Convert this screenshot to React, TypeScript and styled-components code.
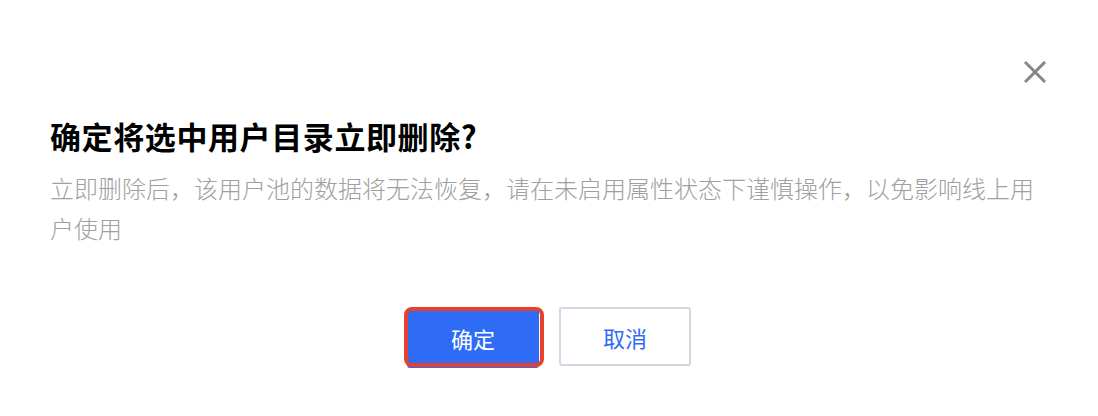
import React from "react";
import styled, { createGlobalStyle } from "styled-components";

const Global = createGlobalStyle`
  html, body { margin: 0; padding: 0; background: #fff; }
  body { font-family: "Noto Sans CJK SC", "Noto Sans", sans-serif; }
`;

const Dialog = styled.div`
  width: 1098px;
  height: 416px;
  box-sizing: border-box;
  padding: 0 52px 0 50px;
  display: flex;
  flex-direction: column;
  background: #fff;
`;

const Header = styled.div`
  display: flex;
  justify-content: flex-end;
  margin-top: 61px;
  height: 22px;
`;

const CloseButton = styled.button`
  width: 22px;
  height: 22px;
  padding: 0;
  border: none;
  background: transparent;
  cursor: pointer;
  display: flex;
`;

const Title = styled.h2`
  margin: 31px 0 0;
  font-size: 31px;
  letter-spacing: 0.6px;
  line-height: 43px;
  font-weight: 700;
  color: #000;
`;

const Desc = styled.p`
  margin: 11px 0 0;
  font-size: 24px;
  letter-spacing: 0;
  line-height: 40px;
  font-weight: 300;
  color: #a0a0a0;
`;

const Footer = styled.div`
  margin-top: 59px;
  display: flex;
  justify-content: center;
  align-items: flex-start;
  gap: 20px;
  padding-left: 2px;
`;

const Button = styled.button<{ $primary?: boolean }>`
  position: relative;
  width: 132px;
  height: ${(p) => (p.$primary ? "60px" : "59px")};
  margin-top: ${(p) => (p.$primary ? "1px" : "0")};
  box-sizing: border-box;
  font-family: inherit;
  font-size: 22px;
  cursor: pointer;
  border-radius: 3px;
  border: 2px solid ${(p) => (p.$primary ? "#2f6cf6" : "#d4d8e3")};
  background: ${(p) => (p.$primary ? "#2f6cf6" : "#fff")};
  color: ${(p) => (p.$primary ? "#fff" : "#2f6cf6")};
`;

const Highlight = styled.span`
  position: absolute;
  left: -5px;
  top: -3px;
  width: 140px;
  height: 60px;
  box-sizing: border-box;
  border: 4px solid #e5412c;
  border-radius: 8px;
  pointer-events: none;
`;

export default function App() {
  return (
    <>
      <Global />
      <Dialog>
        <Header>
          <CloseButton aria-label="关闭">
            <svg width="22" height="22" viewBox="0 0 22 22">
              <path d="M2 2 L20 20 M20 2 L2 20" stroke="#868686" strokeWidth="3" strokeLinecap="square" />
            </svg>
          </CloseButton>
        </Header>
        <Title>确定将选中用户目录立即删除?</Title>
        <Desc>
          立即删除后，该用户池的数据将无法恢复，请在未启用属性状态下谨慎操作，以免影响线上用户使用
        </Desc>
        <Footer>
          <Button $primary>
            确定
            <Highlight />
          </Button>
          <Button>取消</Button>
        </Footer>
      </Dialog>
    </>
  );
}
